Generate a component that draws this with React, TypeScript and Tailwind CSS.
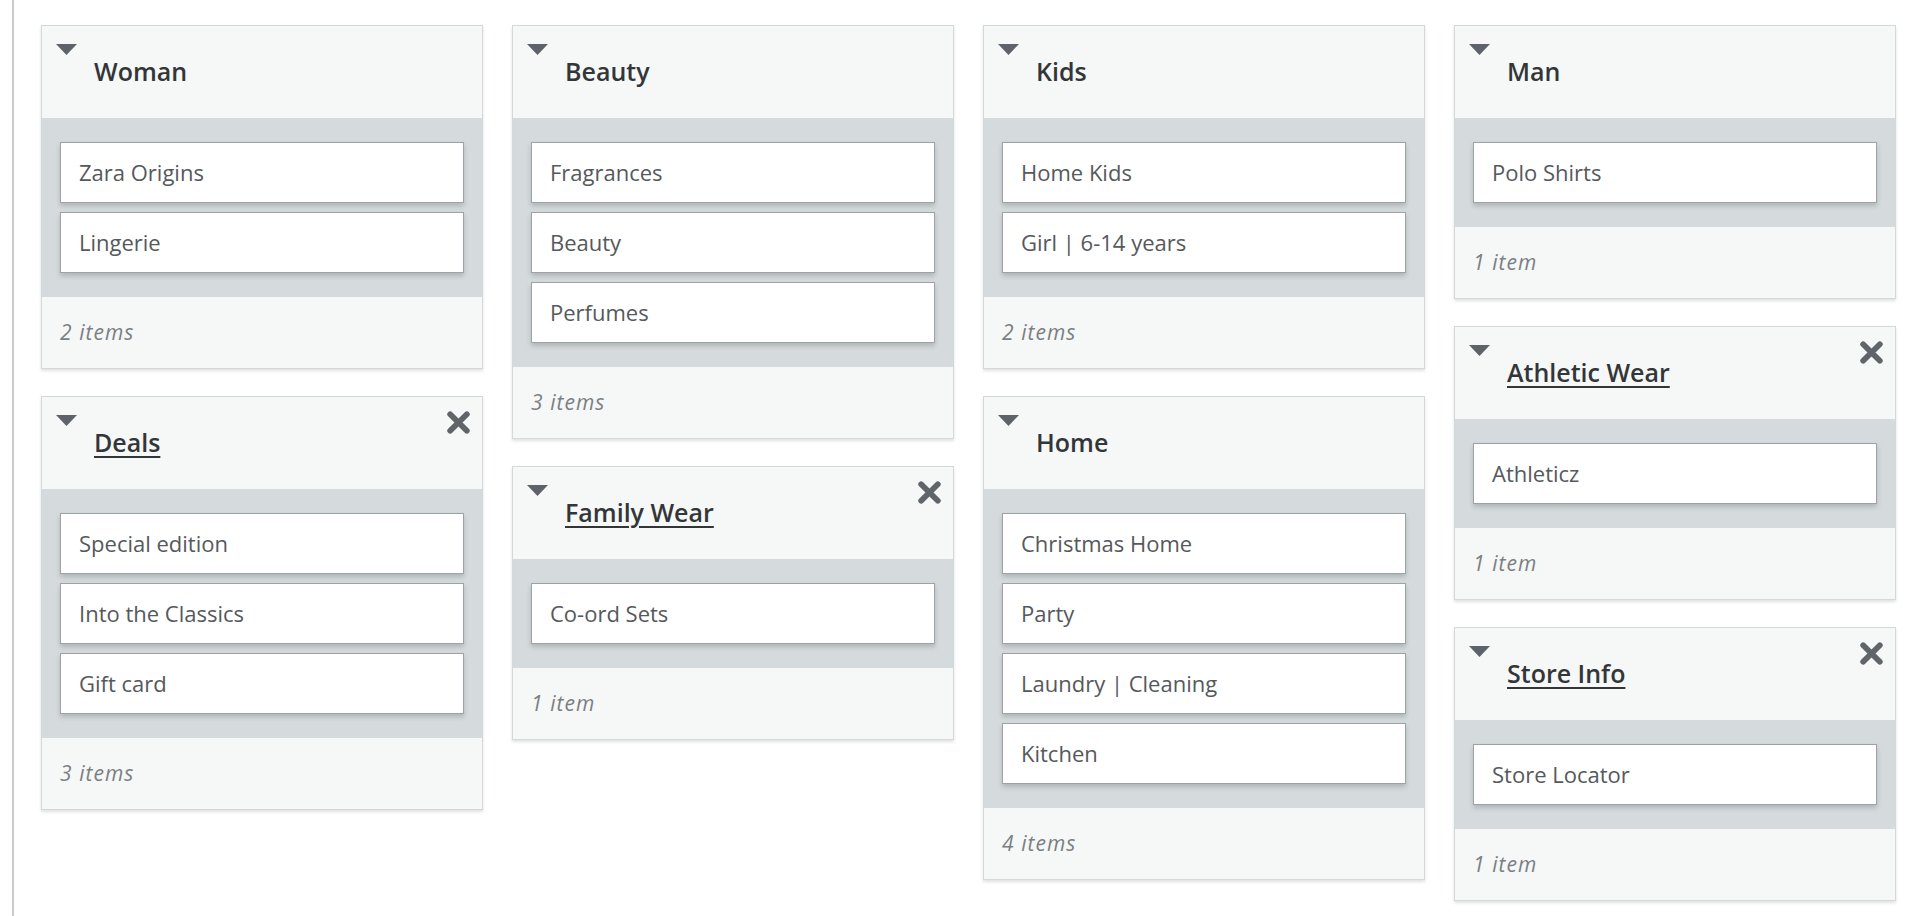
import React from 'react';

type Group = {
  title: string;
  items: string[];
  custom?: boolean;
};

const columns: Group[][] = [
  [
    { title: 'Woman', items: ['Zara Origins', 'Lingerie'] },
    { title: 'Deals', items: ['Special edition', 'Into the Classics', 'Gift card'], custom: true },
  ],
  [
    { title: 'Beauty', items: ['Fragrances', 'Beauty', 'Perfumes'] },
    { title: 'Family Wear', items: ['Co-ord Sets'], custom: true },
  ],
  [
    { title: 'Kids', items: ['Home Kids', 'Girl | 6-14 years'] },
    { title: 'Home', items: ['Christmas Home', 'Party', 'Laundry | Cleaning', 'Kitchen'] },
  ],
  [
    { title: 'Man', items: ['Polo Shirts'] },
    { title: 'Athletic Wear', items: ['Athleticz'], custom: true },
    { title: 'Store Info', items: ['Store Locator'], custom: true },
  ],
];

function Caret() {
  return (
    <svg width="21" height="11" viewBox="0 0 21 11" className="shrink-0">
      <path d="M0 0 H21 L10.5 11 Z" fill="#5d6369" />
    </svg>
  );
}

function CloseIcon() {
  return (
    <svg width="25" height="25" viewBox="0 0 24 24">
      <path d="M4 4 L20 20 M20 4 L4 20" stroke="#5f6569" strokeWidth="5.5" strokeLinecap="round" />
    </svg>
  );
}

function Card({ group }: { group: Group }) {
  const count = group.items.length;
  return (
    <div className="border border-[#d3d8da] bg-[#f6f7f7] shadow-[0_2px_3px_rgba(0,0,0,0.12)]">
      {/* Header */}
      <div className="relative flex h-[92px] items-start pl-[14px] pt-[18px]">
        <Caret />
        <h3
          className={
            'ml-[17px] mt-[11px] text-[25px] font-semibold leading-[32px] text-[#333638] ' +
            (group.custom ? 'underline decoration-[1.5px] underline-offset-[4px]' : '')
          }
        >
          {group.title}
        </h3>
        {group.custom && (
          <button className="absolute right-[11px] top-[13px]">
            <CloseIcon />
          </button>
        )}
      </div>

      {/* Items */}
      <div className="flex flex-col gap-[9px] bg-[#d5dbdd] px-[18px] py-[24px]">
        {group.items.map((item) => (
          <div
            key={item}
            className="flex h-[61px] items-center border border-[#9ca2a6] bg-white px-[18px] text-[22px] text-[#55595c] shadow-[0_3px_5px_rgba(0,0,0,0.18)]"
          >
            {item}
          </div>
        ))}
      </div>

      {/* Footer */}
      <div className="flex h-[71px] items-center px-[18px] text-[21px] italic tracking-[0.05em] text-[#7a7f83]">
        {count} {count === 1 ? 'item' : 'items'}
      </div>
    </div>
  );
}

export default function App() {
  return (
    <div
      className="min-h-screen bg-white"
      style={{ fontFamily: '"Open Sans", "Liberation Sans", sans-serif' }}
    >
      <div className="ml-[12px] min-h-screen border-l-[2px] border-[#c9cccf] pl-[27px] pt-[25px]">
        <div className="grid w-[1855px] grid-cols-4 items-start gap-x-[29px]">
          {columns.map((col, i) => (
            <div key={i} className="flex flex-col gap-[27px]">
              {col.map((g) => (
                <Card key={g.title} group={g} />
              ))}
            </div>
          ))}
        </div>
      </div>
    </div>
  );
}
